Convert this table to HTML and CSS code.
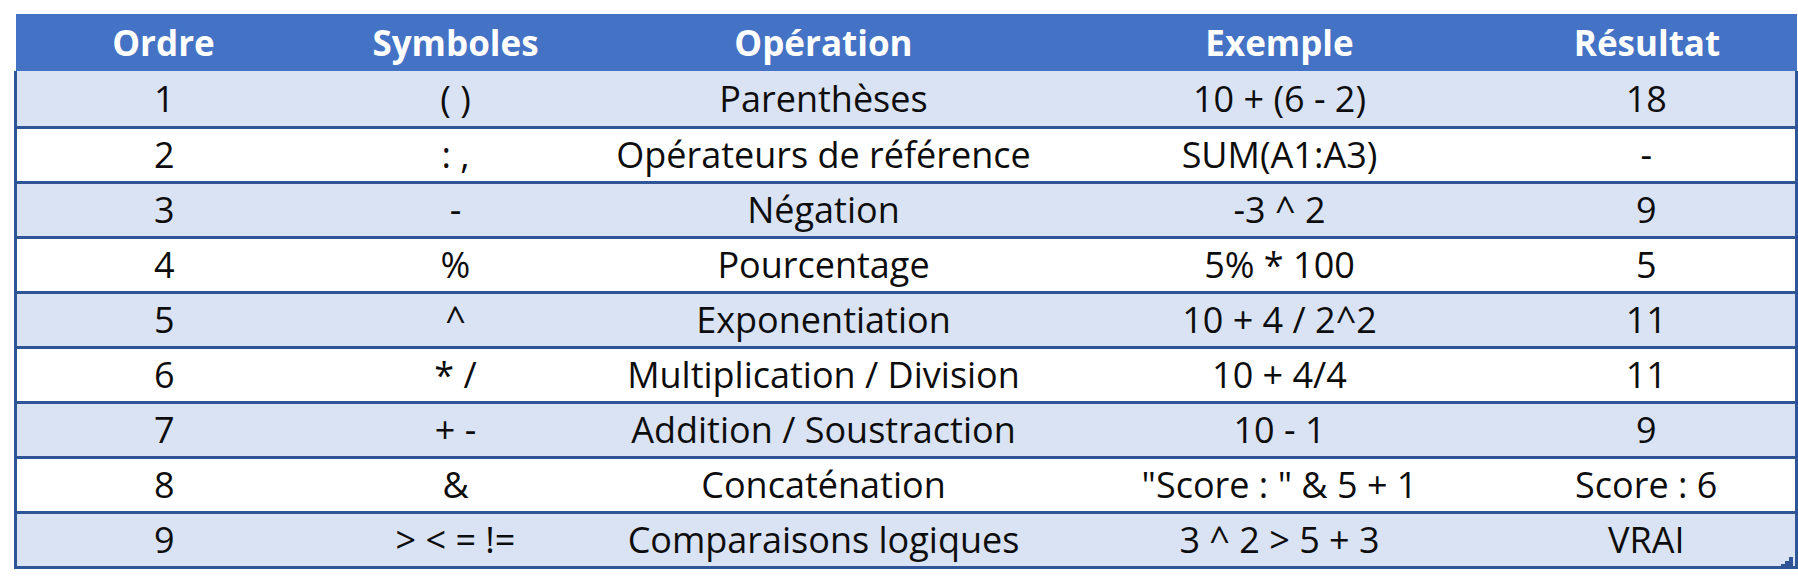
FILE: index.html
```html
<!DOCTYPE html>
<html lang="fr">
<head>
<meta charset="utf-8">
<title>Priorité des opérateurs</title>
<link rel="stylesheet" href="styles.css">
</head>
<body>
<div class="wrap">
<table class="ops">
<colgroup>
<col class="c1"><col class="c2"><col class="c3"><col class="c4"><col class="c5">
</colgroup>
<thead>
<tr><th>Ordre</th><th>Symboles</th><th>Opération</th><th>Exemple</th><th>Résultat</th></tr>
</thead>
<tbody>
<tr class="alt"><td>1</td><td>( )</td><td>Parenthèses</td><td>10 + (6 - 2)</td><td>18</td></tr>
<tr><td>2</td><td>: ,</td><td>Opérateurs de référence</td><td>SUM(A1:A3)</td><td>-</td></tr>
<tr class="alt"><td>3</td><td>-</td><td>Négation</td><td>-3 ^ 2</td><td>9</td></tr>
<tr><td>4</td><td>%</td><td>Pourcentage</td><td>5% * 100</td><td>5</td></tr>
<tr class="alt"><td>5</td><td>^</td><td>Exponentiation</td><td>10 + 4 / 2^2</td><td>11</td></tr>
<tr><td>6</td><td>* /</td><td>Multiplication / Division</td><td>10 + 4/4</td><td>11</td></tr>
<tr class="alt"><td>7</td><td>+ -</td><td>Addition / Soustraction</td><td>10 - 1</td><td>9</td></tr>
<tr><td>8</td><td>&amp;</td><td>Concaténation</td><td>"Score : " &amp; 5 + 1</td><td>Score : 6</td></tr>
<tr class="alt"><td>9</td><td>&gt; &lt; = !=</td><td>Comparaisons logiques</td><td>3 ^ 2 &gt; 5 + 3</td><td>VRAI</td></tr>
</tbody>
</table>
<svg class="handle" width="12" height="10" viewBox="0 0 12 10"><path d="M12 0 V10 H0 V7 H4 V4 H8 V0 Z" fill="#2F5597"/></svg>
</div>
</body>
</html>
```

FILE: styles.css
```css
html, body {
  margin: 0;
  padding: 0;
  background: #ffffff;
}
body {
  padding: 14px 3px 0 14px;
  font-family: "Open Sans", "Liberation Sans", sans-serif;
}
.wrap {
  position: relative;
  width: 1781px;
}
.ops {
  width: 1781px;
  border-collapse: collapse;
  table-layout: fixed;
  font-size: 36px;
  color: #0d0d0d;
}
.c1 { width: 296px; }
.c2 { width: 288px; }
.c3 { width: 448px; }
.c4 { width: 464px; }
.c5 { width: 285px; }
.ops th {
  background: #4472C4;
  color: #ffffff;
  font-size: 35px;
  font-weight: 700;
  height: 57px;
  padding: 0;
  text-align: center;
  vertical-align: middle;
  line-height: 1;
}
.ops th:last-child {
  padding-right: 14px;
}
.ops td {
  height: 52px;
  padding: 0;
  text-align: center;
  vertical-align: middle;
  line-height: 1;
  border-top: 3px solid #2F5597;
  background: #ffffff;
}
.ops tbody tr.alt td {
  background: #DAE3F3;
}
.ops tbody tr:first-child td {
  border-top: none;
  height: 55px;
}
.ops tbody tr:last-child td {
  border-bottom: 3px solid #2F5597;
}
.ops tbody td:first-child {
  border-left: 3px solid #2F5597;
}
.ops tbody td:last-child {
  border-right: 3px solid #2F5597;
  padding-right: 14px;
}
.handle {
  position: absolute;
  right: 2px;
  bottom: 2px;
}
```
